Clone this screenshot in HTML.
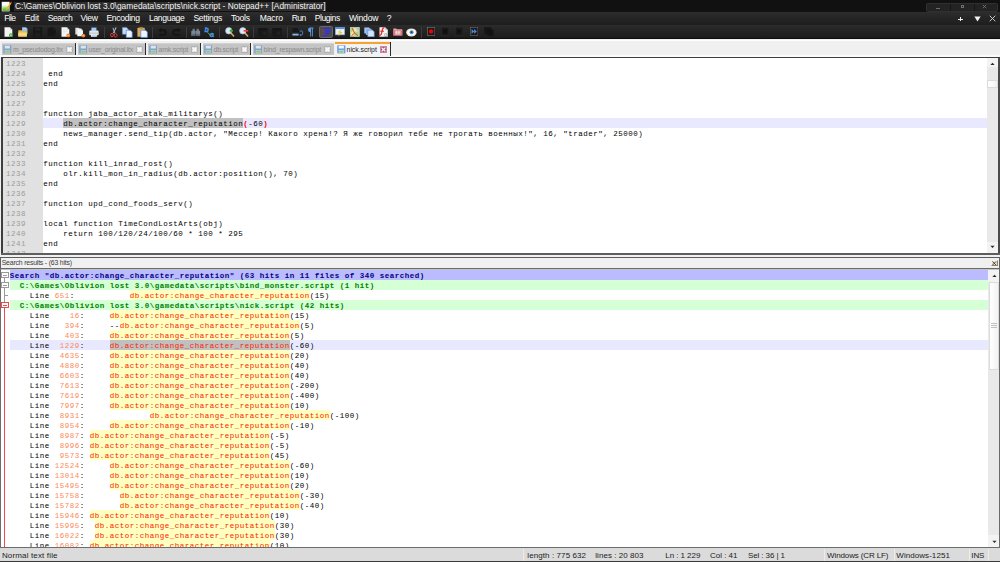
<!DOCTYPE html>
<html><head><meta charset="utf-8"><title>Notepad++</title>
<style>
html,body{margin:0;padding:0;}
body{width:1000px;height:562px;overflow:hidden;background:#f0f0f0;position:relative;font-family:"Liberation Sans",sans-serif;}
div,span{box-sizing:border-box;}
.abs{position:absolute;}
#title{left:0;top:0;width:1000px;height:12px;background:#111111;}
#titletxt{left:14px;top:1.5px;height:9.5px;line-height:9px;font-size:8.4px;color:#f4f4f4;background:#2e2e2e;padding:0 1px;white-space:pre;}
#menu{left:0;top:11.7px;width:1000px;height:13.3px;background:linear-gradient(#2d2d2d,#262626 40%,#1e1e1e);}
.mi{position:absolute;top:1.5px;height:12px;line-height:11px;font-size:8.6px;color:#ffffff;white-space:pre;}
#tool{left:0;top:24.9px;width:1000px;height:14.6px;background:linear-gradient(#2c2c2c,#262626 30%,#1d1d1d 88%,#0a0a0a);}
#tabs{left:0;top:40px;width:1000px;height:18px;background:#f0f0f0;}
.tab{position:absolute;top:3px;height:13px;background:#c4c4c4;border-right:1px solid #333;font-size:6.6px;line-height:13px;color:#8a8a8a;white-space:pre;letter-spacing:-0.1px;}
.tab.act{background:#f7f7f7;color:#222;border-top:1.5px solid #f5a033;top:2px;height:15px;line-height:12px;border-right:1px solid #222;}
.mono{font-family:"Liberation Mono",monospace;font-size:7.5px;white-space:pre;line-height:10px;letter-spacing:0.4992px;}
.ln{position:absolute;left:0;width:1000px;height:10px;}
.t{position:absolute;top:0;height:10px;}
.sp .t{top:0.9px;margin-left:-0.3px;}
.ed .t{top:0.9px;margin-left:0.25px;}
</style></head>
<body>
<div id="title" class="abs">
<svg class="abs" style="left:0.8px;top:0.6px" width="12" height="12" viewBox="0 0 12 12"><defs><linearGradient id="pg" x1="0" y1="0" x2="0" y2="1"><stop offset="0" stop-color="#ffffff"/><stop offset="0.35" stop-color="#f4fbe8"/><stop offset="0.75" stop-color="#7ed04a"/><stop offset="1" stop-color="#3aa818"/></linearGradient></defs><rect x="0.7" y="0.8" width="7.9" height="9.6" fill="#f2f2f2"/><rect x="1.3" y="1.4" width="6.7" height="8.4" fill="url(#pg)"/><path d="M5.2 7.8L9.2 1.6L10.4 2.4L6.4 8.6L5 9.2Z" fill="#f2b21e"/><path d="M9.2 1.6L10.4 2.4L11 1.2L10.2 0.5Z" fill="#d82a2a"/></svg>
<div id="titletxt" class="abs">C:\Games\Oblivion lost 3.0\gamedata\scripts\nick.script - Notepad++ [Administrator]</div>
<div class="abs" style="left:926px;top:3px;width:72px;height:8.6px;background:#232323;border:0.8px solid #303030;border-radius:1.5px"></div>
<div class="abs" style="left:949.8px;top:4px;width:0.8px;height:7px;background:#161616"></div><div class="abs" style="left:974px;top:4px;width:0.8px;height:7px;background:#161616"></div>
<div class="abs" style="left:936.2px;top:7.6px;width:3.6px;height:0.9px;background:#6e6e6e"></div>
<div class="abs" style="left:960.6px;top:5px;width:3.8px;height:3px;border:0.8px solid #6e6e6e;border-top-width:1.2px"></div>
<svg class="abs" style="left:982.4px;top:4.4px" width="5" height="5" viewBox="0 0 5 5"><path d="M0.8 0.8L4.2 4.2M4.2 0.8L0.8 4.2" stroke="#7a7a7a" stroke-width="0.8"/></svg>
</div>
<div id="menu" class="abs">
<div class="mi" style="left:4.2px;letter-spacing:-0.69px">File</div>
<div class="mi" style="left:24.7px;letter-spacing:-0.117px">Edit</div>
<div class="mi" style="left:47.7px;letter-spacing:-0.442px">Search</div>
<div class="mi" style="left:80.45px;letter-spacing:-0.284px">View</div>
<div class="mi" style="left:106.45px;letter-spacing:-0.314px">Encoding</div>
<div class="mi" style="left:148.95px;letter-spacing:-0.333px">Language</div>
<div class="mi" style="left:193.45px;letter-spacing:-0.309px">Settings</div>
<div class="mi" style="left:230.95px;letter-spacing:-0.245px">Tools</div>
<div class="mi" style="left:259.7px;letter-spacing:-0.159px">Macro</div>
<div class="mi" style="left:291.7px;letter-spacing:-0.559px">Run</div>
<div class="mi" style="left:314.7px;letter-spacing:-0.444px">Plugins</div>
<div class="mi" style="left:348.95px;letter-spacing:-0.206px">Window</div>
<div class="mi" style="left:386.7px;letter-spacing:-0.483px">?</div>
<div class="abs" style="left:958.4px;top:6.9px;width:4.4px;height:1px;background:#f0f0f0"></div><div class="abs" style="left:960.1px;top:5.2px;width:1px;height:4.4px;background:#f0f0f0"></div>
<svg class="abs" style="left:973.6px;top:4.6px" width="7" height="6" viewBox="0 0 7 6"><path d="M0.4 0.4H6.6L3.5 5.6Z" fill="#f4f4f4"/></svg>
<svg class="abs" style="left:989.3px;top:3.3px" width="7" height="7" viewBox="0 0 7 7"><path d="M0.7 0.7L6.3 6.3M6.3 0.7L0.7 6.3" stroke="#d8d8d8" stroke-width="0.9"/></svg>
</div>
<div id="tool" class="abs">
<svg class="abs" style="left:3.8px;top:2px;" width="10" height="11" viewBox="0 0 10 11"><path d="M0.5 0.3H5.8L8.3 2.8V9.7H0.5Z" fill="#f4f4f4"/><path d="M5.8 0.3V2.8H8.3Z" fill="#cfcfcf"/><circle cx="6.9" cy="8.2" r="1.9" fill="#3faa3a"/><path d="M6 8.2H7.8M6.9 7.3V9.1" stroke="#d8ffd0" stroke-width="0.6"/></svg>
<svg class="abs" style="left:17.5px;top:2px;" width="10" height="11" viewBox="0 0 10 11"><path d="M4 0.3H8L9.5 1.8V7H4Z" fill="#8fb4e6"/><path d="M5 1.5H8.5M5 3H8.5" stroke="#cfe0f5" stroke-width="0.6"/><path d="M0.3 3.2H3.6L4.4 4.2H8.8V9.6H0.3Z" fill="#e9b648"/><path d="M0.3 5.4H8.8V9.6H0.3Z" fill="#f7d272"/><path d="M0.3 7.3H8.8" stroke="#fbe6a8" stroke-width="0.7"/></svg>
<svg class="abs" style="left:32.5px;top:2.5px;" width="10" height="10" viewBox="0 0 10 10"><rect x="0.2" y="0.2" width="9" height="9.2" rx="0.8" fill="#161616"/><rect x="2" y="0.8" width="5.4" height="3" fill="#222"/><rect x="2" y="5.6" width="5.4" height="3.4" fill="#1e1e1e"/></svg>
<svg class="abs" style="left:47.3px;top:2.5px;" width="9" height="10" viewBox="0 0 9 10"><path d="M0.5 1H5.5L8 3.5V9H0.5Z" fill="#161616"/><path d="M2 0.3H6.5L8.5 2.5V7" stroke="#181818" fill="none" stroke-width="1"/></svg>
<svg class="abs" style="left:61px;top:2px;" width="10" height="11" viewBox="0 0 10 11"><path d="M0.5 0.3H5.8L8.3 2.8V9.7H0.5Z" fill="#f4f4f4"/><path d="M5.8 0.3V2.8H8.3Z" fill="#cfcfcf"/><path d="M2 3H6M2 4.5H6.5M2 6H5" stroke="#dcdcdc" stroke-width="0.5"/><circle cx="7.3" cy="8.4" r="1.9" fill="#ee7a22"/><path d="M6.4 8.4H8.2" stroke="#ffe0c0" stroke-width="0.7"/></svg>
<svg class="abs" style="left:74.8px;top:2px;" width="11" height="11" viewBox="0 0 11 11"><path d="M0.3 0.8H3.5L5 2.3V7.5H0.3Z" fill="#dadada"/><path d="M2.3 1.6H6L8 3.6V9.2H2.3Z" fill="#f4f4f4"/><path d="M6 1.6V3.6H8Z" fill="#c8c8c8"/><circle cx="8.4" cy="8.6" r="1.9" fill="#ee7a22"/><path d="M7.5 8.6H9.3" stroke="#ffe0c0" stroke-width="0.7"/></svg>
<svg class="abs" style="left:89px;top:2px;" width="10" height="11" viewBox="0 0 10 11"><rect x="2.2" y="0.4" width="5.4" height="3.6" fill="#5b97e0"/><rect x="2.9" y="1" width="4" height="2.6" fill="#a9cdf5"/><rect x="0.3" y="3.6" width="9.3" height="4.6" rx="0.8" fill="#e6e6e6"/><rect x="0.3" y="5.6" width="9.3" height="1.6" fill="#c6c6c6"/><rect x="2" y="6.8" width="5.8" height="3" fill="#f6f6f6"/><path d="M2.6 8H7.2M2.6 9H7.2" stroke="#7fb0ea" stroke-width="0.5"/></svg>
<div class="abs" style="left:104px;top:2.5px;width:1px;height:10.5px;background:#3c3c3c"></div>
<svg class="abs" style="left:109.5px;top:2px;" width="9" height="11" viewBox="0 0 9 11"><path d="M5.6 0.3L6.6 0.6L3.8 6.2L3 5.8Z" fill="#b8c4d8"/><path d="M2.4 1L3.4 0.8L5.4 6L4.6 6.4Z" fill="#9fb0cc"/><ellipse cx="2" cy="8" rx="1.4" ry="1.7" fill="none" stroke="#e03a34" stroke-width="1"/><ellipse cx="5.6" cy="8.4" rx="1.4" ry="1.7" fill="none" stroke="#e03a34" stroke-width="1"/></svg>
<svg class="abs" style="left:122.3px;top:2px;" width="11" height="11" viewBox="0 0 11 11"><path d="M0.4 0.6H4.6L6.2 2.2V7.2H0.4Z" fill="#c8daf4"/><path d="M0.4 0.6H4.6L6.2 2.2V7.2H0.4Z" fill="none" stroke="#5c8fd8" stroke-width="0.6"/><path d="M4.2 3.2H8.4L10.2 5V10.4H4.2Z" fill="#eef4fc"/><path d="M4.2 3.2H8.4L10.2 5V10.4H4.2Z" fill="none" stroke="#4c84d4" stroke-width="0.7"/></svg>
<svg class="abs" style="left:137.2px;top:2px;" width="11" height="11" viewBox="0 0 11 11"><rect x="0.4" y="0.8" width="7.4" height="9" rx="0.6" fill="#d9a95e"/><rect x="2.4" y="0.2" width="3.4" height="1.6" fill="#b88a48"/><path d="M3.8 3.2H8.6L10.4 5V10.4H3.8Z" fill="#eef4fc"/><path d="M3.8 3.2H8.6L10.4 5V10.4H3.8Z" fill="none" stroke="#4c84d4" stroke-width="0.7"/></svg>
<div class="abs" style="left:152px;top:2.5px;width:1px;height:10.5px;background:#3c3c3c"></div>
<svg class="abs" style="left:157.5px;top:3px;" width="9" height="9" viewBox="0 0 9 9"><path d="M3 2.2H5.4A2.3 2.3 0 0 1 5.4 6.8H1.4" fill="none" stroke="#151515" stroke-width="2.2"/><path d="M0 2.2L3.4 -0.2V4.6Z" fill="#151515"/></svg>
<svg class="abs" style="left:172px;top:3px;" width="9" height="9" viewBox="0 0 9 9"><path d="M6 2.2H3.6A2.3 2.3 0 0 0 3.6 6.8H7.6" fill="none" stroke="#151515" stroke-width="2.2"/><path d="M9 2.2L5.6 -0.2V4.6Z" fill="#151515"/></svg>
<div class="abs" style="left:185.5px;top:2.5px;width:1px;height:10.5px;background:#3c3c3c"></div>
<svg class="abs" style="left:190.5px;top:3px;" width="10" height="9" viewBox="0 0 10 9"><path d="M1.6 0.8H3.8V3H1.6ZM5.6 0.8H7.8V3H5.6Z" fill="#6e7886"/><path d="M0.3 3.4Q0.3 2.4 1.4 2.4H3.6Q4.4 2.4 4.4 3.4V7.6H0.3ZM5 3.4Q5 2.4 5.8 2.4H8Q9.1 2.4 9.1 3.4V7.6H5Z" fill="#7c8796"/><rect x="3.8" y="3" width="1.8" height="2" fill="#6c7888"/><path d="M0.3 6H4.4V7.8H0.3ZM5 6H9.1V7.8H5Z" fill="#5d6878"/></svg>
<svg class="abs" style="left:204.3px;top:2px;" width="12" height="11" viewBox="0 0 12 11"><text x="0.6" y="5.2" font-family="Liberation Sans" font-style="italic" font-weight="bold" font-size="7" fill="#4a96f0" stroke="#4a96f0" stroke-width="0.3">b</text><text x="6" y="10.2" font-family="Liberation Sans" font-style="italic" font-weight="bold" font-size="7.2" fill="#4a96f0" stroke="#4a96f0" stroke-width="0.3">a</text><path d="M3.4 5.2L6 7.8" stroke="#52b848" stroke-width="1"/><path d="M6.6 8.4L6.3 6.4L4.6 8.1Z" fill="#52b848"/></svg>
<div class="abs" style="left:219.3px;top:2.5px;width:1px;height:10.5px;background:#3c3c3c"></div>
<svg class="abs" style="left:224.5px;top:2.5px;" width="10" height="10" viewBox="0 0 10 10"><path d="M5.4 5.4L8.6 9" stroke="#e2a04a" stroke-width="1.6" stroke-linecap="round"/><circle cx="3.8" cy="3.8" r="3.2" fill="#dce9fb" stroke="#a8b8d0" stroke-width="0.7"/><path d="M4.6 3.8H8M6.3 2.2V5.4" stroke="#38a83a" stroke-width="1.4"/></svg>
<svg class="abs" style="left:238.8px;top:2.5px;" width="10" height="10" viewBox="0 0 10 10"><path d="M5.4 5.4L8.6 9" stroke="#e2a04a" stroke-width="1.6" stroke-linecap="round"/><circle cx="3.8" cy="3.8" r="3.2" fill="#dce9fb" stroke="#a8b8d0" stroke-width="0.7"/><path d="M4.6 3.8H9.2" stroke="#e83a3a" stroke-width="1.6"/></svg>
<div class="abs" style="left:253.3px;top:2.5px;width:1px;height:10.5px;background:#3c3c3c"></div>
<svg class="abs" style="left:257.6px;top:3px;" width="10" height="9" viewBox="0 0 10 9"><rect x="0.3" y="0.3" width="9.2" height="8" fill="#181818"/><rect x="0.3" y="0.3" width="9.2" height="1.6" fill="#141414"/><rect x="5" y="3.4" width="3.4" height="3.4" fill="#222"/></svg>
<svg class="abs" style="left:272px;top:3px;" width="10" height="9" viewBox="0 0 10 9"><rect x="0.3" y="0.3" width="9.4" height="8" fill="#181818"/><rect x="0.3" y="0.3" width="9.4" height="1.6" fill="#141414"/><rect x="5" y="3.4" width="3.4" height="3.4" fill="#222"/></svg>
<div class="abs" style="left:287px;top:2.5px;width:1px;height:10.5px;background:#3c3c3c"></div>
<svg class="abs" style="left:291.5px;top:3px;" width="12" height="9" viewBox="0 0 12 9"><path d="M0.5 1H6M0.5 3H7.5" stroke="#0a0a0a" stroke-width="1.2"/><path d="M0.4 6.6H6.6" stroke="#8ab6ee" stroke-width="1.8"/><path d="M7.6 3H10A0.8 0.8 0 0 1 10.6 3.8V6.2A0.8 0.8 0 0 1 10 7H8.6" fill="none" stroke="#4a86d8" stroke-width="0.9"/><path d="M7.4 7L9 5.8V8.2Z" fill="#4a86d8"/></svg>
<svg class="abs" style="left:307.3px;top:2.5px;" width="7" height="10" viewBox="0 0 7 10"><path d="M3.4 0.6H6.4V1.6H5.8V9.4H4.9V1.6H4.1V9.4H3.2V5.2A2.3 2.3 0 0 1 3.4 0.6Z" fill="#5a9ae6"/></svg>
<div class="abs" style="left:319px;top:1.5px;width:14px;height:11.5px;background:#4e4e4e;border-radius:1.5px;border:0.6px solid #666"></div>
<svg class="abs" style="left:321px;top:2.5px;" width="11" height="10" viewBox="0 0 11 10"><path d="M2 0.3V9.7" stroke="#e03030" stroke-width="0.8" stroke-dasharray="1 0.9"/><path d="M3.2 1.3H9.2M4 3.8H10M4 6.3H8.4M3.2 8.8H6.4" stroke="#2a2aff" stroke-width="1.15"/><path d="M1 1.3H2.6M1 8.8H2.6" stroke="#2a2aff" stroke-width="1"/></svg>
<svg class="abs" style="left:335px;top:2.5px;" width="10" height="10" viewBox="0 0 10 10"><rect x="0.2" y="0.3" width="9.6" height="7.6" fill="#e8f0fa"/><rect x="0.2" y="0.3" width="9.6" height="1.6" fill="#4a86d8"/><rect x="0.2" y="0.3" width="9.6" height="7.6" fill="none" stroke="#5a8ed0" stroke-width="0.6"/><path d="M6.4 2.2L2.6 5.6H4.8L3.2 9.6L7.6 5H5.2Z" fill="#f4c430"/></svg>
<svg class="abs" style="left:350px;top:2.5px;" width="10" height="10" viewBox="0 0 10 10"><rect x="0.2" y="0.3" width="9.2" height="9.2" fill="#e8e6a0"/><path d="M0.2 0.3H4L3 4L0.2 6Z" fill="#a8d890"/><path d="M5 5L9.4 4V9.5H4Z" fill="#a8d890"/><path d="M6 0.3H9.4V3L7 3.6Z" fill="#9cc4e8"/><path d="M2 0.8L4.6 6.2L8 8.6M4.6 6.2L1.6 8.6" stroke="#e03a2a" stroke-width="0.9" fill="none"/><rect x="0.2" y="0.3" width="9.2" height="9.2" fill="none" stroke="#c8c8b0" stroke-width="0.5"/></svg>
<svg class="abs" style="left:363.6px;top:2.5px;" width="11" height="10" viewBox="0 0 11 10"><path d="M0.3 0.4H5L6.4 1.8V6.4H0.3Z" fill="#a8c6f0"/><path d="M2 1.8H7L8.4 3.2V8H2Z" fill="#8cb4ec"/><path d="M3.8 3.2H8.6L10.2 4.8V9.7H3.8Z" fill="#d4e4f8"/><path d="M3.8 3.2H8.6L10.2 4.8V9.7H3.8Z" fill="none" stroke="#5a90dc" stroke-width="0.6"/></svg>
<svg class="abs" style="left:378.3px;top:2px;" width="11" height="11" viewBox="0 0 11 11"><path d="M1.5 0.3H7L9.8 3V9.8H1.5Z" fill="#f4f4f4"/><path d="M7 0.3V3H9.8Z" fill="#cfcfcf"/><path d="M6.4 1C4.8 0.6 4.4 2 4 4.4C3.6 7 3 8.8 0.6 8.4" fill="none" stroke="#e02828" stroke-width="1.2"/><path d="M2.2 4.2H6" stroke="#e02828" stroke-width="1"/><text x="6.2" y="9.4" font-family="Liberation Sans" font-size="4.4" fill="#444">()</text></svg>
<svg class="abs" style="left:392.6px;top:3.5px;" width="10" height="8" viewBox="0 0 10 8"><path d="M0.3 0.4H3.2L4 1.2H9.3V7.4H0.3Z" fill="#e8a0a8"/><path d="M0.3 2.2H9.3V7.4H0.3Z" fill="#d87480"/><path d="M2 3.2H7.6M2 4.6H7.6M2 6H7.6M3.6 3.2V6.4M6 3.2V6.4" stroke="#f8e8ea" stroke-width="0.7"/></svg>
<svg class="abs" style="left:406.4px;top:3px;" width="11" height="9" viewBox="0 0 11 9"><ellipse cx="5.4" cy="4.4" rx="5.2" ry="4" fill="#f2e6cc"/><ellipse cx="5.4" cy="4.4" rx="4" ry="2.6" fill="#fdfdfd"/><circle cx="5.6" cy="4.2" r="2" fill="#4a90e0"/><circle cx="5.6" cy="4.2" r="0.9" fill="#1a3a70"/></svg>
<div class="abs" style="left:421.3px;top:2.5px;width:1px;height:10.5px;background:#3c3c3c"></div>
<svg class="abs" style="left:427px;top:2.2px;" width="8.4" height="9" viewBox="0 0 8.4 9"><rect x="0.3" y="0.3" width="7.6" height="8.2" fill="#1a1a1a" stroke="#7c7c7c" stroke-width="0.6"/><circle cx="4.1" cy="4.4" r="2.2" fill="#f00000"/></svg>
<svg class="abs" style="left:441.2px;top:2.2px;" width="8.4" height="9" viewBox="0 0 8.4 9"><rect x="0.3" y="0.3" width="7.6" height="8.2" fill="#181818" stroke="#2c2c2c" stroke-width="0.6"/><rect x="2.2" y="2.6" width="3.8" height="3.8" fill="#101010"/></svg>
<svg class="abs" style="left:455.4px;top:2.2px;" width="8.4" height="9" viewBox="0 0 8.4 9"><rect x="0.3" y="0.3" width="7.6" height="8.2" fill="#181818" stroke="#2c2c2c" stroke-width="0.6"/><path d="M2.8 2.2L6 4.4L2.8 6.6Z" fill="#0c0c0c"/></svg>
<svg class="abs" style="left:470px;top:2.2px;" width="8.4" height="9" viewBox="0 0 8.4 9"><rect x="0.3" y="0.3" width="7.6" height="8.2" fill="#1a1a1a" stroke="#6c6c6c" stroke-width="0.6"/><path d="M1.6 2L4.2 4.4L1.6 6.8ZM4.2 2L6.8 4.4L4.2 6.8Z" fill="#4a8ee8"/></svg>
<svg class="abs" style="left:484px;top:2.5px;" width="10" height="9" viewBox="0 0 10 9"><rect x="0.3" y="0.3" width="7" height="7" fill="#151515"/><rect x="3.4" y="2.6" width="6" height="6" fill="#121212"/></svg>
</div>
<div id="tabs" class="abs">
<div class="abs" style="left:0;top:-0.4px;width:1000px;height:1.4px;background:#fdfdfd"></div>
<div class="abs" style="left:0;top:15.4px;width:1000px;height:1.4px;background:#fbfbfb"></div>
<div class="abs" style="left:2px;top:2.8px;width:73.6px;height:12.6px;background:#c4c4c4;border-top:0.6px solid #d2d2d2"></div>
<div class="abs" style="left:74.6px;top:2.6px;width:1.2px;height:12.6px;background:#2a2a2a"></div>
<svg class="abs" style="left:3.3px;top:5.1px;opacity:0.9" width="8.6" height="8.6" viewBox="0 0 8.6 8.6"><rect x="0.2" y="0.2" width="8.2" height="8.2" rx="0.9" fill="#7ba0d0"/><rect x="1.7" y="0.7" width="5.2" height="2.8" fill="#dfe8f2"/><rect x="1.7" y="5" width="5.2" height="3.4" fill="#b9d0b4"/><rect x="2.4" y="5.9" width="3.8" height="1.6" fill="#8cc870"/></svg>
<div class="abs" style="left:13.0px;top:3.6px;height:12px;line-height:12px;font-size:6.9px;color:#8a8a8a;white-space:pre;letter-spacing:-0.19px">m_pseudodog.ltx</div>
<div class="abs" style="left:65.89999999999999px;top:6.4px;width:6.8px;height:6.6px;background:#d9d9d9;border:0.6px solid #b4b4b4"></div>
<svg class="abs" style="left:66.8px;top:7.2px" width="5" height="5" viewBox="0 0 5 5"><path d="M0.6 0.6L4.4 4.4M4.4 0.6L0.6 4.4" stroke="#ffffff" stroke-width="1.3"/></svg>
<div class="abs" style="left:77.6px;top:2.8px;width:68.4px;height:12.6px;background:#c4c4c4;border-top:0.6px solid #d2d2d2"></div>
<div class="abs" style="left:145.0px;top:2.6px;width:1.2px;height:12.6px;background:#2a2a2a"></div>
<svg class="abs" style="left:78.89999999999999px;top:5.1px;opacity:0.9" width="8.6" height="8.6" viewBox="0 0 8.6 8.6"><rect x="0.2" y="0.2" width="8.2" height="8.2" rx="0.9" fill="#7ba0d0"/><rect x="1.7" y="0.7" width="5.2" height="2.8" fill="#dfe8f2"/><rect x="1.7" y="5" width="5.2" height="3.4" fill="#b9d0b4"/><rect x="2.4" y="5.9" width="3.8" height="1.6" fill="#8cc870"/></svg>
<div class="abs" style="left:88.6px;top:3.6px;height:12px;line-height:12px;font-size:6.9px;color:#8a8a8a;white-space:pre;letter-spacing:-0.225px">user_original.ltx</div>
<div class="abs" style="left:136.29999999999998px;top:6.4px;width:6.8px;height:6.6px;background:#d9d9d9;border:0.6px solid #b4b4b4"></div>
<svg class="abs" style="left:137.2px;top:7.2px" width="5" height="5" viewBox="0 0 5 5"><path d="M0.6 0.6L4.4 4.4M4.4 0.6L0.6 4.4" stroke="#ffffff" stroke-width="1.3"/></svg>
<div class="abs" style="left:147.5px;top:2.8px;width:53.5px;height:12.6px;background:#c4c4c4;border-top:0.6px solid #d2d2d2"></div>
<div class="abs" style="left:200.0px;top:2.6px;width:1.2px;height:12.6px;background:#2a2a2a"></div>
<svg class="abs" style="left:148.8px;top:5.1px;opacity:0.9" width="8.6" height="8.6" viewBox="0 0 8.6 8.6"><rect x="0.2" y="0.2" width="8.2" height="8.2" rx="0.9" fill="#7ba0d0"/><rect x="1.7" y="0.7" width="5.2" height="2.8" fill="#dfe8f2"/><rect x="1.7" y="5" width="5.2" height="3.4" fill="#b9d0b4"/><rect x="2.4" y="5.9" width="3.8" height="1.6" fill="#8cc870"/></svg>
<div class="abs" style="left:158.5px;top:3.6px;height:12px;line-height:12px;font-size:6.9px;color:#8a8a8a;white-space:pre;letter-spacing:-0.184px">amk.script</div>
<div class="abs" style="left:191.29999999999998px;top:6.4px;width:6.8px;height:6.6px;background:#d9d9d9;border:0.6px solid #b4b4b4"></div>
<svg class="abs" style="left:192.2px;top:7.2px" width="5" height="5" viewBox="0 0 5 5"><path d="M0.6 0.6L4.4 4.4M4.4 0.6L0.6 4.4" stroke="#ffffff" stroke-width="1.3"/></svg>
<div class="abs" style="left:202.5px;top:2.8px;width:48.5px;height:12.6px;background:#c4c4c4;border-top:0.6px solid #d2d2d2"></div>
<div class="abs" style="left:250.0px;top:2.6px;width:1.2px;height:12.6px;background:#2a2a2a"></div>
<svg class="abs" style="left:203.8px;top:5.1px;opacity:0.9" width="8.6" height="8.6" viewBox="0 0 8.6 8.6"><rect x="0.2" y="0.2" width="8.2" height="8.2" rx="0.9" fill="#7ba0d0"/><rect x="1.7" y="0.7" width="5.2" height="2.8" fill="#dfe8f2"/><rect x="1.7" y="5" width="5.2" height="3.4" fill="#b9d0b4"/><rect x="2.4" y="5.9" width="3.8" height="1.6" fill="#8cc870"/></svg>
<div class="abs" style="left:213.5px;top:3.6px;height:12px;line-height:12px;font-size:6.9px;color:#8a8a8a;white-space:pre;letter-spacing:-0.164px">db.script</div>
<div class="abs" style="left:241.29999999999998px;top:6.4px;width:6.8px;height:6.6px;background:#d9d9d9;border:0.6px solid #b4b4b4"></div>
<svg class="abs" style="left:242.2px;top:7.2px" width="5" height="5" viewBox="0 0 5 5"><path d="M0.6 0.6L4.4 4.4M4.4 0.6L0.6 4.4" stroke="#ffffff" stroke-width="1.3"/></svg>
<div class="abs" style="left:252.6px;top:2.8px;width:81.4px;height:12.6px;background:#c4c4c4;border-top:0.6px solid #d2d2d2"></div>
<svg class="abs" style="left:253.9px;top:5.1px;opacity:0.9" width="8.6" height="8.6" viewBox="0 0 8.6 8.6"><rect x="0.2" y="0.2" width="8.2" height="8.2" rx="0.9" fill="#7ba0d0"/><rect x="1.7" y="0.7" width="5.2" height="2.8" fill="#dfe8f2"/><rect x="1.7" y="5" width="5.2" height="3.4" fill="#b9d0b4"/><rect x="2.4" y="5.9" width="3.8" height="1.6" fill="#8cc870"/></svg>
<div class="abs" style="left:263.6px;top:3.6px;height:12px;line-height:12px;font-size:6.9px;color:#8a8a8a;white-space:pre;letter-spacing:-0.204px">bind_respawn.script</div>
<div class="abs" style="left:324.3px;top:6.4px;width:6.8px;height:6.6px;background:#d9d9d9;border:0.6px solid #b4b4b4"></div>
<svg class="abs" style="left:325.2px;top:7.2px" width="5" height="5" viewBox="0 0 5 5"><path d="M0.6 0.6L4.4 4.4M4.4 0.6L0.6 4.4" stroke="#ffffff" stroke-width="1.3"/></svg>
<div class="abs" style="left:334.9px;top:1.8px;width:55.6px;height:15px;background:#f2f2f2"></div>
<div class="abs" style="left:334.9px;top:1.8px;width:55.6px;height:2.4px;background:#f5a433"></div>
<div class="abs" style="left:389.5px;top:2.4px;width:1.2px;height:13.2px;background:#2a2a2a"></div>
<svg class="abs" style="left:337.3px;top:5.2px;opacity:1" width="8.6" height="8.6" viewBox="0 0 8.6 8.6"><rect x="0.2" y="0.2" width="8.2" height="8.2" rx="0.9" fill="#6a9ee6"/><rect x="1.7" y="0.7" width="5.2" height="2.8" fill="#f4f8fc"/><rect x="1.7" y="5" width="5.2" height="3.4" fill="#c8dcc0"/><rect x="2.4" y="5.9" width="3.8" height="1.6" fill="#8cc870"/></svg>
<div class="abs" style="left:346.6px;top:3.6px;height:12px;line-height:12px;font-size:6.9px;color:#16162a;white-space:pre;letter-spacing:-0.043px">nick.script</div>
<div class="abs" style="left:379.8px;top:6px;width:7.2px;height:7px;background:#b24a7a;border:0.5px solid #c88aa8"></div>
<svg class="abs" style="left:380.9px;top:7px" width="5" height="5" viewBox="0 0 5 5"><path d="M0.6 0.6L4.4 4.4M4.4 0.6L0.6 4.4" stroke="#ffffff" stroke-width="1.3"/></svg>
</div>
<div class="abs" style="left:1.2px;top:57px;width:997.6px;height:197px;background:#fff"></div>
<div class="abs" style="left:1.5px;top:57.5px;width:41.4px;height:196px;background:#e1e1e1"></div>
<div class="abs mono ed" style="left:0;top:58px;width:987.2px;height:194.8px;overflow:hidden">
<div class="ln" style="top:0.2px">
<span class="t" style="left:5.7px;color:#9c9c9c">1223</span>
</div>
<div class="ln" style="top:10.2px">
<span class="t" style="left:5.7px;color:#9c9c9c">1224</span>
<span class="t" style="left:43.0px;color:#000"> end</span>
</div>
<div class="ln" style="top:20.2px">
<span class="t" style="left:5.7px;color:#9c9c9c">1225</span>
<span class="t" style="left:43.0px;color:#000">end</span>
</div>
<div class="ln" style="top:30.2px">
<span class="t" style="left:5.7px;color:#9c9c9c">1226</span>
</div>
<div class="ln" style="top:40.2px">
<span class="t" style="left:5.7px;color:#9c9c9c">1227</span>
</div>
<div class="ln" style="top:50.2px">
<span class="t" style="left:5.7px;color:#9c9c9c">1228</span>
<span class="t" style="left:43.0px;color:#000">function jaba_actor_atak_militarys()</span>
</div>
<div class="ln" style="top:60.2px">
<div class="abs" style="left:43px;top:0;width:944px;height:10px;background:#e8e8ff"></div>
<div class="abs" style="left:63.0px;top:0;width:180.0px;height:10px;background:#c0c0c0"></div>
<span class="t" style="left:5.7px;color:#9c9c9c">1229</span>
<span class="t" style="left:43.0px;color:#000">    db.actor:change_character_reputation<span style="color:#ff0000;font-weight:bold">(</span>-60<span style="color:#ff0000;font-weight:bold">)</span></span>
</div>
<div class="ln" style="top:70.2px">
<span class="t" style="left:5.7px;color:#9c9c9c">1230</span>
<span class="t" style="left:43.0px;color:#000">    news_manager.send_tip(db.actor, "Мессер! Какого хрена!? Я же говорил тебе не трогать военных!", 16, "trader", 25000)</span>
</div>
<div class="ln" style="top:80.2px">
<span class="t" style="left:5.7px;color:#9c9c9c">1231</span>
<span class="t" style="left:43.0px;color:#000">end</span>
</div>
<div class="ln" style="top:90.2px">
<span class="t" style="left:5.7px;color:#9c9c9c">1232</span>
</div>
<div class="ln" style="top:100.2px">
<span class="t" style="left:5.7px;color:#9c9c9c">1233</span>
<span class="t" style="left:43.0px;color:#000">function kill_inrad_rost()</span>
</div>
<div class="ln" style="top:110.2px">
<span class="t" style="left:5.7px;color:#9c9c9c">1234</span>
<span class="t" style="left:43.0px;color:#000">    olr.kill_mon_in_radius(db.actor:position(), 70)</span>
</div>
<div class="ln" style="top:120.2px">
<span class="t" style="left:5.7px;color:#9c9c9c">1235</span>
<span class="t" style="left:43.0px;color:#000">end</span>
</div>
<div class="ln" style="top:130.2px">
<span class="t" style="left:5.7px;color:#9c9c9c">1236</span>
</div>
<div class="ln" style="top:140.2px">
<span class="t" style="left:5.7px;color:#9c9c9c">1237</span>
<span class="t" style="left:43.0px;color:#000">function upd_cond_foods_serv()</span>
</div>
<div class="ln" style="top:150.2px">
<span class="t" style="left:5.7px;color:#9c9c9c">1238</span>
</div>
<div class="ln" style="top:160.2px">
<span class="t" style="left:5.7px;color:#9c9c9c">1239</span>
<span class="t" style="left:43.0px;color:#000">local function TimeCondLostArts(obj)</span>
</div>
<div class="ln" style="top:170.2px">
<span class="t" style="left:5.7px;color:#9c9c9c">1240</span>
<span class="t" style="left:43.0px;color:#000">    return 100/120/24/100/60 * 100 * 295</span>
</div>
<div class="ln" style="top:180.2px">
<span class="t" style="left:5.7px;color:#9c9c9c">1241</span>
<span class="t" style="left:43.0px;color:#000">end</span>
</div>
<div class="ln" style="top:190.2px">
<span class="t" style="left:5.7px;color:#9c9c9c">1242</span>
</div>
</div>
<div class="abs" style="left:987.2px;top:58.4px;width:11.2px;height:194px;background:#e9e9e9"></div>
<div class="abs" style="left:987.2px;top:58.4px;width:11.2px;height:8.8px;background:#f3f3f3"></div>
<div class="abs" style="left:987.2px;top:241.8px;width:11.2px;height:10.8px;background:#f3f3f3"></div>
<svg class="abs" style="left:990.4px;top:61.6px" width="5" height="4" viewBox="0 0 5 4"><path d="M0.4 3.1H4.6L2.5 0.7Z" fill="#2a2a2a"/></svg>
<svg class="abs" style="left:990.4px;top:244.8px" width="5" height="4" viewBox="0 0 5 4"><path d="M0.4 0.7H4.6L2.5 3.1Z" fill="#2a2a2a"/></svg>
<div class="abs" style="left:987.4px;top:79.8px;width:10.4px;height:7.8px;background:linear-gradient(90deg,#ffffff,#f0f0f0);border:0.6px solid #dadada"></div>
<div class="abs" style="left:998.3px;top:57px;width:1.7px;height:197px;background:#4a4a4a"></div>
<div class="abs" style="left:1.2px;top:56.8px;width:998.8px;height:1.4px;background:#3e3e3e"></div>
<div class="abs" style="left:1.2px;top:56.8px;width:1.5px;height:197.2px;background:#3e3e3e"></div>
<div class="abs" style="left:1.2px;top:252.9px;width:998.8px;height:2px;background:#5e5e5e"></div>
<div class="abs" style="left:0;top:256.8px;width:1000px;height:12.5px;background:#f0f0f0;border-top:1.3px solid #5c5c5c;border-bottom:1.6px solid #6a6a6a;border-left:1.2px solid #606060;border-right:1.2px solid #606060"></div>
<div class="abs" style="left:0;top:269.3px;width:1000px;height:0.8px;background:#c4c4c4"></div>
<div class="abs" style="left:1.7px;top:257.6px;height:10px;line-height:10px;font-size:6.9px;color:#3a3a3a;white-space:pre;letter-spacing:-0.187px">Search results - (63 hits)</div>
<div class="abs" style="left:991px;top:259.6px;width:6.8px;height:6.8px;background:#e4e0cc;border-right:0.8px solid #8a866c;border-bottom:0.8px solid #8a866c;border-top:0.5px solid #f8f6e8;border-left:0.5px solid #f8f6e8"></div><svg class="abs" style="left:992px;top:260.6px" width="4.6" height="4.6" viewBox="0 0 4.6 4.6"><path d="M0.5 0.5L4.1 4.1M4.1 0.5L0.5 4.1" stroke="#2a2a2a" stroke-width="0.8"/></svg>
<div class="abs" style="left:0;top:269.5px;width:1000px;height:278px;background:#fff"></div>
<div class="abs mono sp" style="left:0;top:270.0px;width:988px;height:277.29999999999995px;overflow:hidden">
<div class="ln" style="top:0px">
<div class="abs" style="left:10px;top:0;width:978px;height:10px;background:#bbbbff"></div>
<span class="t" style="left:10.0px;color:#000080;font-weight:bold">Search "db.actor:change_character_reputation" (63 hits in 11 files of 340 searched)</span>
</div>
<div class="ln" style="top:10px">
<div class="abs" style="left:10px;top:0;width:978px;height:10px;background:#d5ffd5"></div>
<span class="t" style="left:10.0px;color:#008000;font-weight:bold">  C:\Games\Oblivion lost 3.0\gamedata\scripts\bind_monster.script (1 hit)</span>
</div>
<div class="ln" style="top:20px">
<div class="abs" style="left:130.0px;top:0;width:180.0px;height:10px;background:#ffffbf"></div>
<span class="t" style="left:10.0px;color:#000">    Line <span style="color:#ff8855">651</span>:           <span style="color:#ff2200">db.actor:change_character_reputation</span>(15)</span>
</div>
<div class="ln" style="top:30px">
<div class="abs" style="left:10px;top:0;width:978px;height:10px;background:#d5ffd5"></div>
<span class="t" style="left:10.0px;color:#008000;font-weight:bold">  C:\Games\Oblivion lost 3.0\gamedata\scripts\nick.script (42 hits)</span>
</div>
<div class="ln" style="top:40px">
<div class="abs" style="left:110.0px;top:0;width:180.0px;height:10px;background:#ffffbf"></div>
<span class="t" style="left:10.0px;color:#000">    Line <span style="color:#ff8855">   16</span>:     <span style="color:#ff2200">db.actor:change_character_reputation</span>(15)</span>
</div>
<div class="ln" style="top:50px">
<div class="abs" style="left:120.0px;top:0;width:180.0px;height:10px;background:#ffffbf"></div>
<span class="t" style="left:10.0px;color:#000">    Line <span style="color:#ff8855">  394</span>:     --<span style="color:#ff2200">db.actor:change_character_reputation</span>(5)</span>
</div>
<div class="ln" style="top:60px">
<div class="abs" style="left:110.0px;top:0;width:180.0px;height:10px;background:#ffffbf"></div>
<span class="t" style="left:10.0px;color:#000">    Line <span style="color:#ff8855">  403</span>:     <span style="color:#ff2200">db.actor:change_character_reputation</span>(5)</span>
</div>
<div class="ln" style="top:70px">
<div class="abs" style="left:10px;top:0;width:978px;height:10px;background:#e8e8ff"></div>
<div class="abs" style="left:110.0px;top:0;width:180.0px;height:10px;background:#c0c0c0"></div>
<span class="t" style="left:10.0px;color:#000">    Line <span style="color:#ff8855"> 1229</span>:     <span style="color:#ff2200">db.actor:change_character_reputation</span>(-60)</span>
</div>
<div class="ln" style="top:80px">
<div class="abs" style="left:110.0px;top:0;width:180.0px;height:10px;background:#ffffbf"></div>
<span class="t" style="left:10.0px;color:#000">    Line <span style="color:#ff8855"> 4635</span>:     <span style="color:#ff2200">db.actor:change_character_reputation</span>(20)</span>
</div>
<div class="ln" style="top:90px">
<div class="abs" style="left:110.0px;top:0;width:180.0px;height:10px;background:#ffffbf"></div>
<span class="t" style="left:10.0px;color:#000">    Line <span style="color:#ff8855"> 4880</span>:     <span style="color:#ff2200">db.actor:change_character_reputation</span>(40)</span>
</div>
<div class="ln" style="top:100px">
<div class="abs" style="left:110.0px;top:0;width:180.0px;height:10px;background:#ffffbf"></div>
<span class="t" style="left:10.0px;color:#000">    Line <span style="color:#ff8855"> 6603</span>:     <span style="color:#ff2200">db.actor:change_character_reputation</span>(40)</span>
</div>
<div class="ln" style="top:110px">
<div class="abs" style="left:110.0px;top:0;width:180.0px;height:10px;background:#ffffbf"></div>
<span class="t" style="left:10.0px;color:#000">    Line <span style="color:#ff8855"> 7613</span>:     <span style="color:#ff2200">db.actor:change_character_reputation</span>(-200)</span>
</div>
<div class="ln" style="top:120px">
<div class="abs" style="left:110.0px;top:0;width:180.0px;height:10px;background:#ffffbf"></div>
<span class="t" style="left:10.0px;color:#000">    Line <span style="color:#ff8855"> 7619</span>:     <span style="color:#ff2200">db.actor:change_character_reputation</span>(-400)</span>
</div>
<div class="ln" style="top:130px">
<div class="abs" style="left:110.0px;top:0;width:180.0px;height:10px;background:#ffffbf"></div>
<span class="t" style="left:10.0px;color:#000">    Line <span style="color:#ff8855"> 7997</span>:     <span style="color:#ff2200">db.actor:change_character_reputation</span>(10)</span>
</div>
<div class="ln" style="top:140px">
<div class="abs" style="left:150.0px;top:0;width:180.0px;height:10px;background:#ffffbf"></div>
<span class="t" style="left:10.0px;color:#000">    Line <span style="color:#ff8855"> 8931</span>:             <span style="color:#ff2200">db.actor:change_character_reputation</span>(-100)</span>
</div>
<div class="ln" style="top:150px">
<div class="abs" style="left:110.0px;top:0;width:180.0px;height:10px;background:#ffffbf"></div>
<span class="t" style="left:10.0px;color:#000">    Line <span style="color:#ff8855"> 8954</span>:     <span style="color:#ff2200">db.actor:change_character_reputation</span>(-10)</span>
</div>
<div class="ln" style="top:160px">
<div class="abs" style="left:90.0px;top:0;width:180.0px;height:10px;background:#ffffbf"></div>
<span class="t" style="left:10.0px;color:#000">    Line <span style="color:#ff8855"> 8987</span>: <span style="color:#ff2200">db.actor:change_character_reputation</span>(-5)</span>
</div>
<div class="ln" style="top:170px">
<div class="abs" style="left:90.0px;top:0;width:180.0px;height:10px;background:#ffffbf"></div>
<span class="t" style="left:10.0px;color:#000">    Line <span style="color:#ff8855"> 8996</span>: <span style="color:#ff2200">db.actor:change_character_reputation</span>(-5)</span>
</div>
<div class="ln" style="top:180px">
<div class="abs" style="left:90.0px;top:0;width:180.0px;height:10px;background:#ffffbf"></div>
<span class="t" style="left:10.0px;color:#000">    Line <span style="color:#ff8855"> 9573</span>: <span style="color:#ff2200">db.actor:change_character_reputation</span>(45)</span>
</div>
<div class="ln" style="top:190px">
<div class="abs" style="left:110.0px;top:0;width:180.0px;height:10px;background:#ffffbf"></div>
<span class="t" style="left:10.0px;color:#000">    Line <span style="color:#ff8855">12524</span>:     <span style="color:#ff2200">db.actor:change_character_reputation</span>(-60)</span>
</div>
<div class="ln" style="top:200px">
<div class="abs" style="left:110.0px;top:0;width:180.0px;height:10px;background:#ffffbf"></div>
<span class="t" style="left:10.0px;color:#000">    Line <span style="color:#ff8855">13014</span>:     <span style="color:#ff2200">db.actor:change_character_reputation</span>(10)</span>
</div>
<div class="ln" style="top:210px">
<div class="abs" style="left:110.0px;top:0;width:180.0px;height:10px;background:#ffffbf"></div>
<span class="t" style="left:10.0px;color:#000">    Line <span style="color:#ff8855">15495</span>:     <span style="color:#ff2200">db.actor:change_character_reputation</span>(20)</span>
</div>
<div class="ln" style="top:220px">
<div class="abs" style="left:120.0px;top:0;width:180.0px;height:10px;background:#ffffbf"></div>
<span class="t" style="left:10.0px;color:#000">    Line <span style="color:#ff8855">15758</span>:       <span style="color:#ff2200">db.actor:change_character_reputation</span>(-30)</span>
</div>
<div class="ln" style="top:230px">
<div class="abs" style="left:120.0px;top:0;width:180.0px;height:10px;background:#ffffbf"></div>
<span class="t" style="left:10.0px;color:#000">    Line <span style="color:#ff8855">15782</span>:       <span style="color:#ff2200">db.actor:change_character_reputation</span>(-40)</span>
</div>
<div class="ln" style="top:240px">
<div class="abs" style="left:90.0px;top:0;width:180.0px;height:10px;background:#ffffbf"></div>
<span class="t" style="left:10.0px;color:#000">    Line <span style="color:#ff8855">15946</span>: <span style="color:#ff2200">db.actor:change_character_reputation</span>(10)</span>
</div>
<div class="ln" style="top:250px">
<div class="abs" style="left:95.0px;top:0;width:180.0px;height:10px;background:#ffffbf"></div>
<span class="t" style="left:10.0px;color:#000">    Line <span style="color:#ff8855">15995</span>:  <span style="color:#ff2200">db.actor:change_character_reputation</span>(30)</span>
</div>
<div class="ln" style="top:260px">
<div class="abs" style="left:95.0px;top:0;width:180.0px;height:10px;background:#ffffbf"></div>
<span class="t" style="left:10.0px;color:#000">    Line <span style="color:#ff8855">16022</span>:  <span style="color:#ff2200">db.actor:change_character_reputation</span>(30)</span>
</div>
<div class="ln" style="top:270px">
<div class="abs" style="left:90.0px;top:0;width:180.0px;height:10px;background:#ffffbf"></div>
<span class="t" style="left:10.0px;color:#000">    Line <span style="color:#ff8855">16082</span>: <span style="color:#ff2200">db.actor:change_character_reputation</span>(10)</span>
</div>
</div>
<div class="abs" style="left:0;top:270.0px;width:10px;height:277.20000000000005px;background:#fff;overflow:hidden">
<div class="abs" style="left:4.4px;top:8px;width:0.9px;height:18px;background:#9a9a9a"></div>
<div class="abs" style="left:4.4px;top:24.6px;width:4px;height:0.9px;background:#9a9a9a"></div>
<div class="abs" style="left:4.4px;top:25px;width:0.9px;height:7px;background:#9a9a9a"></div>
<div class="abs" style="left:4.2px;top:38px;width:1.2px;height:245px;background:#f04a4a"></div>
<div class="abs" style="left:1px;top:1.8px;width:7.8px;height:6.5px;border:0.9px solid #9a9a9a;background:#fff"></div><div class="abs" style="left:2.6px;top:4.5px;width:4.5px;height:0.9px;background:#9a9a9a"></div>
<div class="abs" style="left:1px;top:11.8px;width:7.8px;height:6.5px;border:0.9px solid #9a9a9a;background:#fff"></div><div class="abs" style="left:2.6px;top:14.5px;width:4.5px;height:0.9px;background:#9a9a9a"></div>
<div class="abs" style="left:1px;top:31.8px;width:7.8px;height:6.5px;border:0.9px solid #f04a4a;background:#fff"></div><div class="abs" style="left:2.6px;top:34.5px;width:4.5px;height:0.9px;background:#f04a4a"></div>
</div>
<div class="abs" style="left:988px;top:270px;width:10.8px;height:277.4px;background:#e9e9e9"></div>
<div class="abs" style="left:988px;top:270px;width:10.8px;height:12.2px;background:#f3f3f3"></div>
<div class="abs" style="left:988px;top:535.4px;width:10.8px;height:12px;background:#f3f3f3"></div>
<div class="abs" style="left:988.6px;top:282.2px;width:10.2px;height:87.6px;background:linear-gradient(90deg,#ffffff,#f2f2f2);border:0.6px solid #dcdcdc"></div>
<svg class="abs" style="left:992px;top:274px" width="5" height="4" viewBox="0 0 5 4"><path d="M0.4 3.1H4.6L2.5 0.7Z" fill="#2a2a2a"/></svg>
<svg class="abs" style="left:992px;top:539.6px" width="5" height="4" viewBox="0 0 5 4"><path d="M0.4 0.7H4.6L2.5 3.1Z" fill="#2a2a2a"/></svg>
<div class="abs" style="left:991.2px;top:322.8px;width:5.6px;height:0.7px;background:#c0c0c0"></div>
<div class="abs" style="left:991.2px;top:325.05px;width:5.6px;height:0.7px;background:#c0c0c0"></div>
<div class="abs" style="left:991.2px;top:327.3px;width:5.6px;height:0.7px;background:#c0c0c0"></div>
<div class="abs" style="left:998.8px;top:268px;width:1.2px;height:280px;background:#6a6a6a"></div>
<div class="abs" style="left:0;top:547px;width:1000px;height:15px;background:#dbdbdb;border-top:1px solid #6c6c6c;border-bottom:1.2px solid #3a3a3a"></div>
<div class="abs" style="left:0;top:268px;width:0.9px;height:280px;background:#6e6e6e"></div>
<div class="abs" style="left:1.9000000000000001px;top:550.1px;height:12px;line-height:12px;font-size:8px;color:#1c1c1c;white-space:pre;letter-spacing:0.153px">Normal text file</div>
<div class="abs" style="left:527.3000000000001px;top:550.1px;height:12px;line-height:12px;font-size:8px;color:#1c1c1c;white-space:pre;letter-spacing:0.089px">length : 775 632</div>
<div class="abs" style="left:595.3000000000001px;top:550.1px;height:12px;line-height:12px;font-size:8px;color:#1c1c1c;white-space:pre;letter-spacing:0.044px">lines : 20 803</div>
<div class="abs" style="left:665.3000000000001px;top:550.1px;height:12px;line-height:12px;font-size:8px;color:#1c1c1c;white-space:pre;letter-spacing:-0.059px">Ln : 1 229</div>
<div class="abs" style="left:710.1px;top:550.1px;height:12px;line-height:12px;font-size:8px;color:#1c1c1c;white-space:pre;letter-spacing:-0.046px">Col : 41</div>
<div class="abs" style="left:747.9000000000001px;top:550.1px;height:12px;line-height:12px;font-size:8px;color:#1c1c1c;white-space:pre;letter-spacing:-0.092px">Sel : 36 | 1</div>
<div class="abs" style="left:827.1px;top:550.1px;height:12px;line-height:12px;font-size:8px;color:#1c1c1c;white-space:pre;letter-spacing:-0.128px">Windows (CR LF)</div>
<div class="abs" style="left:896.3000000000001px;top:550.1px;height:12px;line-height:12px;font-size:8px;color:#1c1c1c;white-space:pre;letter-spacing:0.057px">Windows-1251</div>
<div class="abs" style="left:971.3000000000001px;top:550.1px;height:12px;line-height:12px;font-size:8px;color:#1c1c1c;white-space:pre;letter-spacing:-0.112px">INS</div>
<div class="abs" style="left:522.8px;top:549px;width:1px;height:11.6px;background:#ececec"></div>
<div class="abs" style="left:824.4px;top:549px;width:1px;height:11.6px;background:#ececec"></div>
<div class="abs" style="left:893.6px;top:549px;width:1px;height:11.6px;background:#ececec"></div>
<div class="abs" style="left:969px;top:549px;width:1px;height:11.6px;background:#ececec"></div>
<div class="abs" style="left:988px;top:549px;width:1px;height:11.6px;background:#ececec"></div>
</body></html>
